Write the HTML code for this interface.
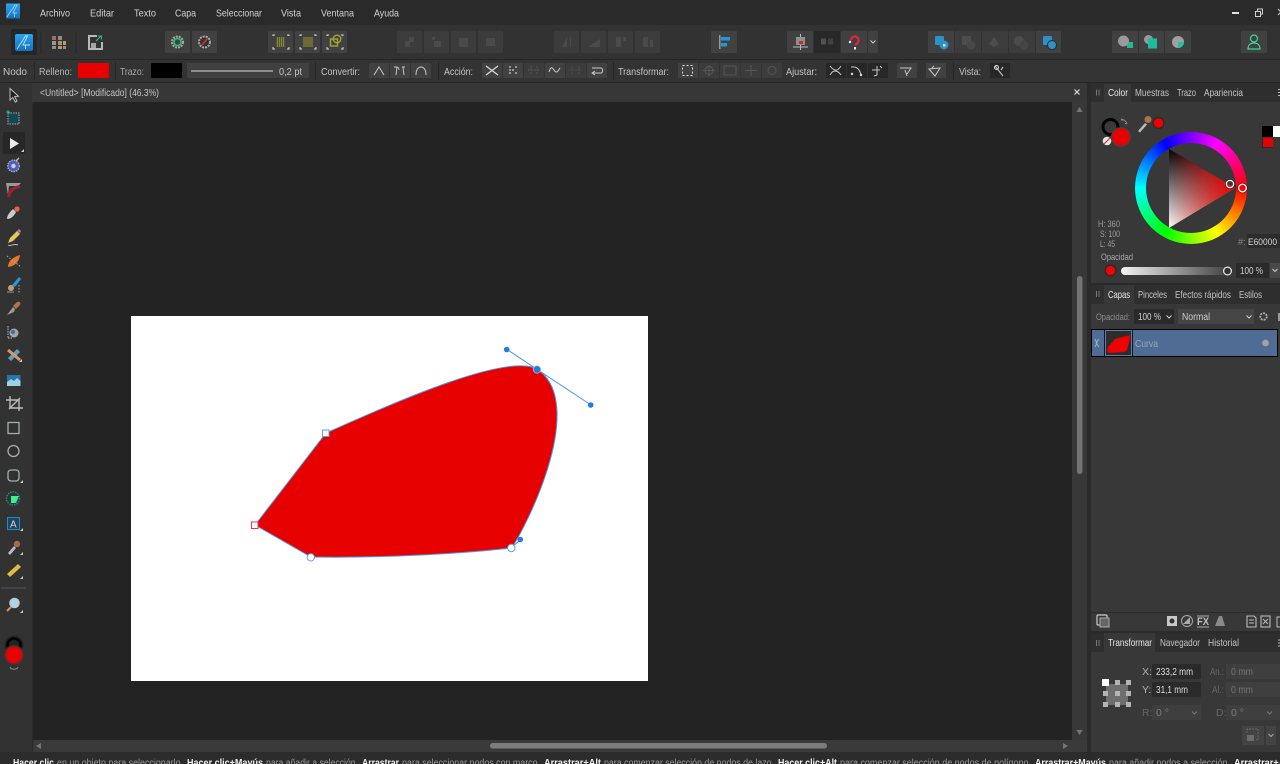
<!DOCTYPE html>
<html><head><meta charset="utf-8"><title>Affinity Designer</title>
<style>
html,body{margin:0;padding:0;background:#2b2b2b;width:1280px;height:764px;overflow:hidden}
svg{display:block;position:absolute;left:0;top:0}
text{font-family:"Liberation Sans",sans-serif;font-size:10.500px;fill:#c4c4c4;filter:blur(.25px)}
.b{fill:#414141}.d{fill:#3c3c3c}.k{fill:#272727}
.m{fill:#d2d2d2}.g{fill:#8a8a8a}.w{fill:#e6e6e6}
.ic{fill:none;stroke:#c8c8c8;stroke-width:1}
.di{fill:#4a4a4a}
.st{font-size:10px;fill:#9a9a9a}.sb{font-size:10px;fill:#f0f0f0;font-weight:bold}
</style></head><body>
<svg width="1280" height="764" viewBox="0 0 1280 764" xmlns="http://www.w3.org/2000/svg">
<defs>
<linearGradient id="tv" x1="0" y1="0" x2="0" y2="1"><stop offset="0" stop-color="#000"/><stop offset="1" stop-color="#fff"/></linearGradient>
<linearGradient id="th" x1="0" y1="0" x2="1" y2="0"><stop offset="0" stop-color="#e60000" stop-opacity="0"/><stop offset="1" stop-color="#f00000"/></linearGradient>
<linearGradient id="op" x1="0" y1="0" x2="1" y2="0"><stop offset="0" stop-color="#f4f4f4"/><stop offset="1" stop-color="#444"/></linearGradient>
<linearGradient id="logo" x1="0" y1="0" x2="0" y2="1"><stop offset="0" stop-color="#2aa6ee"/><stop offset="1" stop-color="#1670c0"/></linearGradient>
</defs>

<!-- main backgrounds -->
<rect width="1280" height="764" fill="#2b2b2b"/>
<rect x="0" y="0" width="1280" height="25" fill="#2a2a2a"/>
<rect x="0" y="25" width="1280" height="34" fill="#323232"/>
<rect x="0" y="60" width="1280" height="22" fill="#333333"/>
<rect x="0" y="59" width="1280" height="1" fill="#262626"/>
<rect x="0" y="82" width="1280" height="1" fill="#262626"/>
<rect x="0" y="83" width="32" height="681" fill="#323232"/>
<rect x="32" y="83" width="1056" height="19" fill="#373737"/>
<rect x="33" y="102" width="1039" height="638" fill="#232323"/>
<rect x="1072" y="102" width="15" height="650" fill="#383838"/>
<rect x="33" y="740" width="1054" height="12" fill="#3a3a3a"/>
<rect x="0" y="752" width="1280" height="12" fill="#2c2c2c"/>
<rect x="1077" y="276" width="5.500" height="198" rx="2.700" fill="#747474"/>
<rect x="490" y="743" width="337" height="5.500" rx="2.700" fill="#7c7c7c"/>
<path d="M1079.500 107l-3 5h6zM1079.500 735l-3-5h6z" fill="#777"/>
<path d="M36 746l5-3v6zM1068 746l-5-3v6z" fill="#777"/>

<!-- menu -->
<path d="M6 3.500h14v15H6z" fill="url(#logo)"/>
<path d="M7 17L15 5h2L13 13h4M14.500 13v4" fill="none" stroke="#a8d8f6" stroke-width=".8"/>
<text class="m" lengthAdjust="spacingAndGlyphs" x="40" y="16.500" textLength="30">Archivo</text>
<text class="m" lengthAdjust="spacingAndGlyphs" x="90" y="16.500" textLength="24">Editar</text>
<text class="m" lengthAdjust="spacingAndGlyphs" x="134" y="16.500" textLength="22">Texto</text>
<text class="m" lengthAdjust="spacingAndGlyphs" x="175" y="16.500" textLength="21">Capa</text>
<text class="m" lengthAdjust="spacingAndGlyphs" x="216" y="16.500" textLength="46">Seleccionar</text>
<text class="m" lengthAdjust="spacingAndGlyphs" x="281" y="16.500" textLength="20">Vista</text>
<text class="m" lengthAdjust="spacingAndGlyphs" x="321" y="16.500" textLength="33">Ventana</text>
<text class="m" lengthAdjust="spacingAndGlyphs" x="374" y="16.500" textLength="25">Ayuda</text>
<rect x="1232" y="12" width="7" height="2" fill="#e0e0e0"/>
<path d="M1255.500 11.500h5v5h-5zM1257.500 11v-2h5v5h-2" fill="none" stroke="#d0d0d0"/>
<path d="M1278 9l6 6M1284 9l-6 6" stroke="#d0d0d0"/>

<!-- toolbar: left -->
<rect x="11" y="29" width="26" height="26" rx="2" fill="#262626"/>
<rect x="15" y="34" width="18" height="17" rx="2" fill="url(#logo)"/>
<path d="M17 49L25.500 36h2L23 45h7M25.500 45v4" fill="none" stroke="#bfe4fa" stroke-width=".9"/>
<rect x="40.500" y="32" width="1" height="21" fill="#272727"/>
<g fill="#8d8d8d"><rect x="52" y="36" width="4" height="4" fill="#a46a6a"/><rect x="58" y="36" width="4" height="4"/><rect x="52" y="41" width="4" height="4" fill="#999"/><rect x="58" y="41" width="4" height="4" fill="#b59060"/><rect x="63" y="41" width="3" height="4" fill="#b0a068"/><rect x="52" y="46" width="4" height="3"/><rect x="58" y="46" width="4" height="3" fill="#b59c6c"/><rect x="63" y="46" width="3" height="3"/></g>
<rect x="75.500" y="32" width="1" height="21" fill="#272727"/>
<path d="M97 36h-8v13h13v-7" fill="none" stroke="#b8b8b8" stroke-width="2"/>
<rect x="91" y="43" width="5" height="5" fill="#a5a5a5"/>
<path d="M96 41l5-5m-3 0h3.500v3.500" fill="none" stroke="#3fb393" stroke-width="1"/>

<!-- toolbar buttons -->
<rect class="b" x="165" y="31" width="25" height="22" rx="1"/>
<rect class="b" x="192" y="31" width="25" height="22" rx="1"/>
<circle cx="177.500" cy="42" r="5.500" fill="none" stroke="#a8a8a8" stroke-width="2" stroke-dasharray="2 1"/>
<circle cx="177.500" cy="42" r="3.500" fill="none" stroke="#27c27d" stroke-width="1.600"/>
<circle cx="204.500" cy="42" r="5.500" fill="#333" stroke="#a8a8a8" stroke-width="2" stroke-dasharray="2 1"/>
<path d="M201.500 45.500l6-7" stroke="#e03040" stroke-width="1.500"/>

<rect class="b" x="268" y="31" width="25" height="22" rx="1"/>
<rect class="b" x="295" y="31" width="25" height="22" rx="1"/>
<rect class="b" x="322" y="31" width="25" height="22" rx="1"/>
<rect x="276" y="37" width="9" height="10" fill="#54542c"/>
<path d="M277 38h7M277 40h7M277 42h7M277 44h7M277 46h7" stroke="#b9b84a" stroke-dasharray="1 1"/>
<path d="M273 36v-1h2M287 35h2v1M273 47v2h2M287 49h2v-2M300 36v-1h2M314 35h2v1M300 47v2h2M314 49h2v-2M327 36v-1h2M341 35h2v1M327 47v2h2M341 49h2v-2" fill="none" stroke="#ddd"/>
<rect x="303" y="37" width="10" height="10" fill="#6c6c34"/>
<rect x="330.500" y="39" width="7" height="7" fill="none" stroke="#a4a832" stroke-width="1.400"/>
<circle cx="337" cy="39" r="3.800" fill="none" stroke="#a4a832" stroke-width="1.400"/>

<g class="d">
<rect x="397" y="31" width="25" height="22"/><rect x="424" y="31" width="25" height="22"/><rect x="451" y="31" width="25" height="22"/><rect x="478" y="31" width="25" height="22"/>
<rect x="554" y="31" width="25" height="22"/><rect x="581" y="31" width="25" height="22"/><rect x="608" y="31" width="25" height="22"/><rect x="635" y="31" width="25" height="22"/>
</g>
<g class="di">
<rect x="405" y="41" width="5" height="6"/><rect x="409" y="37" width="5" height="5"/>
<rect x="434" y="41" width="7" height="6"/><rect x="432" y="37" width="3" height="3"/>
<rect x="459" y="38" width="9" height="9"/>
<rect x="486" y="38" width="9" height="8"/>
<path d="M562 47l5-10v10zM570 47v-10h1v10z"/>
<path d="M588 47l12-8v8z"/>
<path d="M616 37h5v10h-5zM623 37h3v4h-3z"/>
<path d="M643 37h5v10h-5zM650 40h3v7h-3z"/>
</g>

<rect class="b" x="711" y="31" width="26" height="22" rx="1"/>
<rect x="719" y="35" width="1.500" height="14" fill="#999"/>
<rect x="721" y="37" width="9" height="3.500" fill="#2198d8"/>
<rect x="721" y="43" width="6" height="3.500" fill="#2198d8"/>

<rect class="b" x="787" y="31" width="26" height="22" rx="1"/>
<rect x="814" y="31" width="26" height="22" fill="#282828"/>
<rect class="b" x="841" y="31" width="26" height="22" rx="1"/>
<rect class="b" x="868" y="31" width="10" height="22" rx="1"/>
<path d="M793 47h15M800.500 34v16" stroke="#bdbdbd"/>
<rect x="796" y="37" width="9" height="8" fill="#8f8f8f"/>
<rect x="799" y="41" width="4" height="3" fill="#d8242f"/>
<rect x="821" y="38.500" width="5" height="6" fill="#505050"/><rect x="828" y="38.500" width="5" height="6" fill="#424242"/>
<path d="M851 40.500a3.800 3.800 0 1 1 6.500 2.500l-2.500 2" fill="none" stroke="#e5253b" stroke-width="2.200"/>
<rect x="854" y="47" width="2" height="2.500" fill="#eee"/><circle cx="850" cy="42" r="1.200" fill="#eee"/>
<path d="M870.500 40.500l2.500 2.500 2.500-2.500" fill="none" stroke="#ccc"/>

<g class="b">
<rect x="928" y="31" width="26" height="22"/><rect x="1036" y="31" width="25" height="22"/>
</g>
<rect class="d" x="955" y="31" width="26" height="22"/><rect class="d" x="982" y="31" width="26" height="22"/><rect class="d" x="1009" y="31" width="26" height="22"/>
<rect x="935" y="36" width="9" height="9" rx="1" fill="#2f90c8"/><circle cx="944" cy="45" r="4.500" fill="#2f90c8"/><rect x="943" y="44" width="2.500" height="2.500" fill="#bfe4f7"/>
<rect x="962" y="36" width="9" height="9" fill="#4d4d4d"/><circle cx="971" cy="45" r="4.500" fill="#484848"/>
<path d="M989 44l5-7 5 7-5 3z" fill="#4c4c4c"/>
<circle cx="1019" cy="41" r="5" fill="#4c4c4c"/><circle cx="1024" cy="45" r="4.500" fill="#454545"/>
<rect x="1043" y="36" width="9" height="9" rx="1" fill="#2f90c8"/><circle cx="1052" cy="45" r="4.500" fill="#2f90c8" stroke="#2a2a2a"/>

<rect class="b" x="1112" y="31" width="26" height="22"/><rect class="b" x="1139" y="31" width="25" height="22"/><rect class="b" x="1165" y="31" width="26" height="22"/>
<path d="M1127 42h6v6h-6z" fill="#25b898"/><circle cx="1123.500" cy="41" r="5.500" fill="#9a9a9a"/>
<circle cx="1148.500" cy="39.500" r="4.500" fill="#9a9a9a"/><rect x="1148" y="38.500" width="9" height="10" fill="#1cbd9c"/>
<circle cx="1178" cy="42" r="6" fill="#a0a0a0"/><path d="M1178 42h6a6 6 0 0 1-6 6z" fill="#22c0a0"/>
<rect class="b" x="1241" y="31" width="26" height="22"/>
<circle cx="1254" cy="38.500" r="3.500" fill="none" stroke="#3dd79a" stroke-width="1.200"/>
<path d="M1248 49c0-4 2.500-6 6-6s6 2 6 6z" fill="none" stroke="#3dd79a" stroke-width="1.200"/>

<!-- context bar -->
<text lengthAdjust="spacingAndGlyphs" x="3" y="75" textLength="24" fill="#c9c9c9">Nodo</text>
<g fill="#262626"><rect x="34" y="62" width="1" height="18"/><rect x="115" y="62" width="1" height="18"/><rect x="315" y="62" width="1" height="18"/><rect x="438" y="62" width="1" height="18"/><rect x="613" y="62" width="1" height="18"/><rect x="953" y="62" width="1" height="18"/></g>
<text lengthAdjust="spacingAndGlyphs" x="39" y="75" textLength="33" style="fill:#b8b8b8">Relleno:</text>
<rect x="78" y="63" width="31" height="15" rx="1" fill="#e60000"/>
<text lengthAdjust="spacingAndGlyphs" x="120" y="75" textLength="24" style="fill:#a8a8a8">Trazo:</text>
<rect x="151" y="63" width="31" height="15" rx="1" fill="#000"/>
<rect x="187" y="63" width="122" height="15" fill="#404040"/>
<rect x="191" y="70" width="82" height="2" fill="#8c8c8c"/>
<text lengthAdjust="spacingAndGlyphs" x="279" y="75" textLength="23">0,2 pt</text>
<text lengthAdjust="spacingAndGlyphs" x="321" y="75" textLength="39">Convertir:</text>
<g class="b"><rect x="369" y="63" width="20" height="15"/><rect x="390" y="63" width="20" height="15"/><rect x="411" y="63" width="20" height="15"/>
<rect x="482" y="63" width="20" height="15"/><rect x="503" y="63" width="20" height="15"/><rect x="587" y="63" width="20" height="15"/><rect x="545" y="63" width="20" height="15"/></g>
<rect class="d" x="524" y="63" width="20" height="15"/><rect class="d" x="566" y="63" width="20" height="15"/>
<path d="M374 75l5-8 5 8M394 67h3c1 0 2 1 2 3M405 67h-3M396 75l1-8M404 75l-1-8M416 75c0-5 2-8 5-8s5 3 5 8" class="ic"/>
<text lengthAdjust="spacingAndGlyphs" x="444" y="75" textLength="29">Acción:</text>
<path d="M486 66l12 9M498 66l-12 9" stroke="#d8d8d8" stroke-width="1.300"/>
<path d="M510 66v8M516 66v3M516 72v3M512 70h2" stroke="#c8c8c8" stroke-width="1.200" stroke-dasharray="2 1"/>
<path d="M531 66v9M537 66v9M528 70h12" stroke="#555" stroke-dasharray="2 1"/>
<path d="M549 72c2-6 3-5 5-2s3 3 6-2" class="ic"/>
<path d="M572 66v9M579 66v9M569 70h13" stroke="#4d4d4d" stroke-dasharray="2 1"/>
<path d="M592 68h9c2 0 2 5 0 5h-8M595 71l-3 2 3 2" class="ic"/>
<text lengthAdjust="spacingAndGlyphs" x="618" y="75" textLength="51">Transformar:</text>
<g class="b"><rect x="678" y="63" width="20" height="15"/></g>
<g class="d"><rect x="699" y="63" width="20" height="15"/><rect x="720" y="63" width="20" height="15"/><rect x="741" y="63" width="20" height="15"/><rect x="762" y="63" width="20" height="15"/></g>
<rect x="682.500" y="65.500" width="10" height="10" fill="none" stroke="#ddd" stroke-dasharray="2 2"/>
<circle cx="709" cy="70.500" r="4" fill="none" stroke="#585858"/><path d="M703 70.500h12M709 65v11M724 66v9h12v-9zM751 65v11M745 70.500h12" fill="none" stroke="#555"/><circle cx="772" cy="70.500" r="4" fill="none" stroke="#555"/>
<text lengthAdjust="spacingAndGlyphs" x="786" y="75" textLength="31">Ajustar:</text>
<rect class="k" x="826" y="63" width="20" height="15"/><rect class="k" x="847" y="63" width="20" height="15"/><rect class="k" x="868" y="63" width="20" height="15"/>
<path d="M830 66c2 3 3 3 5 4s4-1 6-4M830 75c2-3 3-4 5-4s4 1 6 4" class="ic"/>
<path d="M851 67h3c3 0 6 3 7 8" class="ic"/><circle cx="852" cy="74" r="1.200" fill="#ddd"/><circle cx="861" cy="75" r="1.200" fill="#ddd"/>
<path d="M872 70h8M877 66v9l-3 1M880 66l2 2" class="ic"/>
<rect class="b" x="897" y="63" width="20" height="15"/><rect class="b" x="926" y="63" width="20" height="15"/>
<path d="M900 68h11l-4 6M905 70l2 6" class="ic"/>
<path d="M929 69l11-1-5 8zM932 68l2-2" class="ic"/>
<text lengthAdjust="spacingAndGlyphs" x="959" y="75" textLength="22">Vista:</text>
<rect class="k" x="990" y="63" width="20" height="15"/>
<path d="M995 66l8 10M1003 67l-2 3" stroke="#bbb" stroke-width="1.200"/><circle cx="996.500" cy="67.500" r="2" fill="none" stroke="#ddd"/>

<!-- doc tab -->
<text lengthAdjust="spacingAndGlyphs" x="40" y="96" textLength="119" style="font-size:10px;fill:#c6c6c6">&lt;Untitled&gt; [Modificado] (46.3%)</text>
<path d="M1074.500 89.500l5 5M1079.500 89.500l-5 5" stroke="#ddd" stroke-width="1.200"/>

<!-- document -->
<rect x="131" y="316" width="517" height="365" fill="#fff"/>
<path d="M255 525L326 433C400 400 507 353 537 369C591 405 520 539 511 548C450 555 370 558 311 557Z" fill="#e60000" stroke="#4a9bea" stroke-width="1"/>
<path d="M507 349.500L591 405M511 548L520.500 539.500" stroke="#4a96e8" stroke-width="1"/>
<circle cx="506.700" cy="349.500" r="2.800" fill="#1f7fe0"/>
<circle cx="590.700" cy="405" r="2.800" fill="#1f7fe0"/>
<circle cx="520.300" cy="539.500" r="2.800" fill="#1f7fe0"/>
<circle cx="537" cy="369.500" r="3.800" fill="#1f7fe0" stroke="#f4c0b8" stroke-width=".7"/>
<rect x="322.500" y="430" width="6.500" height="6.500" fill="#fff" stroke="#5b9fe8"/>
<rect x="251.500" y="522" width="6.500" height="6.500" fill="#fff" stroke="#ee3a44"/>
<circle cx="310.800" cy="557.300" r="3.700" fill="#fff" stroke="#5b9fe8"/>
<circle cx="511.300" cy="548" r="3.700" fill="#fff" stroke="#5b9fe8"/>

<!-- left tools -->
<path d="M10 88.500V100l2.800-2.500 2.500 4.500 1.700-1-2.300-4.500 3.800-.3z" fill="#222" stroke="#bdbdbd"/>
<rect x="8" y="113" width="11" height="11" fill="#134a52" stroke="#aaa" stroke-dasharray="1.500 1"/>
<path d="M6 112h4M8 110v4" stroke="#2fb38d"/>
<rect x="3" y="132" width="22" height="22" rx="2" fill="#272727"/>
<path d="M10 138v11l9-5.500z" fill="#ececec"/><path d="M24 152v-3l-3 3z" fill="#ccc"/>
<circle cx="13.500" cy="166" r="5.800" fill="#4f5fc0" stroke="#aaa" stroke-width="1.400" stroke-dasharray="1.500 1"/><circle cx="13.500" cy="166" r="2.200" fill="#c8cfea"/><path d="M16 161l3-3" stroke="#bbb" stroke-width="1.400"/>
<path d="M6 183h15l-3 3h-9l-1 9z" fill="#9a9a9a"/><path d="M7 197c1-7 5-11 13-12v3c-6 1-9 4-10 9z" fill="#a51f2c"/>
<path d="M7 219c0-4 3-7 6-10l3 3c-2 4-5 7-9 7z" fill="#c9c9c9"/><circle cx="17" cy="209" r="2.600" fill="#f0603d"/>
<path d="M8 243l2-5 7-7 3 3-7 7z" fill="#e6c75c"/><path d="M17 231l2-2 2 2-1 2z" fill="#d660c8"/><path d="M8 245c3 2 5-2 10 0" stroke="#bbb" fill="none"/>
<path d="M8 267c0-6 5-10 12-12-1 7-5 11-12 12z" fill="#e8772a"/><path d="M7 256l14 11" stroke="#aaa" stroke-dasharray="1.500 1.500"/>
<path d="M12 285l7-8 2 2-6 8z" fill="#2a94dc"/><circle cx="11" cy="288" r="3" fill="#c89a78"/><path d="M7 292h7" stroke="#999"/><path d="M19 285v8" stroke="#aaa" stroke-dasharray="1.500 1.500"/>
<path d="M7 315l7-3 1-3-2-2-3 4z" fill="#9a9a9a"/><path d="M13 306l4-4c3-1 4 1 3 3l-4 4z" fill="#b5704c"/>
<circle cx="14" cy="333" r="4.500" fill="#a5a5a5"/><path d="M8 326v12M8 338h4" stroke="#bbb" stroke-dasharray="1.500 1"/><circle cx="13" cy="332" r="2" fill="#2c72b8"/>
<path d="M8 358l9-9 3 3-9 9z" fill="#5f9ec8"/><path d="M8 350l12 10" stroke="#cf9b62" stroke-width="3"/><path d="M22 362v-3l-3 3z" fill="#ccc"/>
<rect x="7" y="375" width="13.500" height="11" fill="#2378a8"/><path d="M7 382l4-3 3 2 3-3 3.500 3v5H7z" fill="#9ed0e6"/>
<path d="M6 400h13v11M10 396v12h13M9 409l11-11" fill="none" stroke="#bcbcbc" stroke-width="1.400"/>
<rect x="8" y="422.500" width="11" height="11" fill="#2b3236" stroke="#ababab" stroke-width="1.300"/>
<circle cx="13.500" cy="451" r="5.500" fill="#2b3236" stroke="#ababab" stroke-width="1.300"/>
<rect x="8" y="470" width="11" height="11" rx="3" fill="#2b3236" stroke="#ababab" stroke-width="1.300"/><path d="M23 483v-3l-3 3z" fill="#ccc"/>
<circle cx="13" cy="498.500" r="6.500" fill="none" stroke="#2a7d94" stroke-width="1.500" stroke-dasharray="1.500 1"/><path d="M11 496h8l-3 7-5 0z" fill="#3bf08f"/>
<rect x="7.500" y="517.500" width="12" height="12" fill="#1d4460" stroke="#2a88bc"/><text x="10" y="527.500" style="font-size:10px;fill:#d5d5d5">A</text><path d="M23 531v-3l-3 3z" fill="#ccc"/>
<path d="M8 553l6-7 2 2-6 7z" fill="#bdbdbd"/><circle cx="17" cy="544" r="3.200" fill="#ad6c48"/><path d="M23 555v-3l-3 3z" fill="#ccc"/>
<path d="M7 574l11-10 3 3-11 10z" fill="#e3bb43"/><path d="M23 579v-3l-3 3z" fill="#ccc"/>
<rect x="1" y="587.500" width="25" height="1" fill="#555"/>
<circle cx="14.500" cy="603" r="4.500" fill="#a8d8f0" stroke="#c5c5c5" stroke-width="1.600"/><path d="M11 607l-4 4" stroke="#c89468" stroke-width="2"/><path d="M23 613v-3l-3 3z" fill="#ccc"/>
<circle cx="14" cy="645" r="9.500" fill="#222"/><circle cx="14" cy="645" r="6.500" fill="none" stroke="#000" stroke-width="2.500"/>
<circle cx="14" cy="655" r="10" fill="#383838"/><circle cx="14" cy="655" r="8.500" fill="#e60000"/>
<path d="M10 667c1 3 7 3 8 0" fill="none" stroke="#888"/>

<!-- right panel -->
<rect x="1087" y="83" width="4" height="681" fill="#2b2b2b"/>
<rect x="1091" y="83" width="189" height="19" fill="#2e2e2e"/>
<rect x="1091" y="102" width="189" height="181" fill="#383838"/>
<rect x="1104" y="84" width="27" height="18" fill="#383838"/>
<path d="M1096.500 89.500v6M1099 89.500v6" stroke="#777"/>
<text lengthAdjust="spacingAndGlyphs" x="1108" y="96" textLength="20" class="w">Color</text>
<text lengthAdjust="spacingAndGlyphs" x="1135" y="96" textLength="34">Muestras</text>
<text lengthAdjust="spacingAndGlyphs" x="1177" y="96" textLength="19">Trazo</text>
<text lengthAdjust="spacingAndGlyphs" x="1204" y="96" textLength="39">Apariencia</text>
<path d="M1278 89.500h3M1278 92.500h3M1278 95.500h3" stroke="#bbb"/>

<circle cx="1111" cy="127" r="9" fill="#3a3a3a"/><circle cx="1110.500" cy="127" r="7.500" fill="none" stroke="#000" stroke-width="3"/>
<circle cx="1121" cy="137" r="10" fill="#444"/><circle cx="1121" cy="137" r="8.800" fill="#e60000"/>
<circle cx="1107" cy="141" r="4.300" fill="#e8e8e8"/><path d="M1104 144l6-6" stroke="#e03030" stroke-width="1.200"/>
<path d="M1121 119c3 .5 5 2 6 5M1127 124l-2-.5M1121 119l1.500 2" fill="none" stroke="#888"/>
<path d="M1138 131l7-8 2 1.500-7 8z" fill="#bbb"/><circle cx="1148" cy="119.500" r="3.500" fill="#b0714c"/>
<circle cx="1158.500" cy="123" r="6" fill="#2a2a2a"/><circle cx="1158.500" cy="123" r="4.800" fill="#f00000"/>

<rect x="1262" y="126" width="11" height="11" fill="#000"/><rect x="1273" y="126" width="7" height="11" fill="#fff"/><rect x="1262" y="137" width="11" height="11" fill="#2a2a2a"/><rect x="1263" y="137.500" width="10" height="9.500" fill="#e60000"/>

<foreignObject x="1135" y="132" width="112" height="112"><div xmlns="http://www.w3.org/1999/xhtml" style="width:112px;height:112px;border-radius:50%;background:conic-gradient(from 90deg,#f00,#ff0 60deg,#0f0 120deg,#0ff 180deg,#00f 240deg,#f0f 300deg,#f00 360deg)"></div></foreignObject>
<circle cx="1191" cy="188" r="45" fill="#383838"/>
<polygon points="1169,149 1169,228 1235,188" fill="url(#tv)"/>
<polygon points="1169,149 1169,228 1235,188" fill="url(#th)"/>
<circle cx="1230" cy="184" r="3.700" fill="none" stroke="#fff" stroke-width="1.300"/><circle cx="1230" cy="184" r="4.700" fill="none" stroke="#222" stroke-width=".6"/>
<circle cx="1242.500" cy="188" r="3.900" fill="none" stroke="#fff" stroke-width="1.300"/><circle cx="1242.500" cy="188" r="4.900" fill="none" stroke="#222" stroke-width=".6"/>

<text lengthAdjust="spacingAndGlyphs" x="1098" y="227" textLength="22" style="font-size:9px;fill:#9e9e9e">H: 360</text>
<text lengthAdjust="spacingAndGlyphs" x="1100" y="237" textLength="20" style="font-size:9px;fill:#9e9e9e">S: 100</text>
<text lengthAdjust="spacingAndGlyphs" x="1100" y="247" textLength="15" style="font-size:9px;fill:#9e9e9e">L: 45</text>
<text x="1238" y="245" style="font-size:9px;fill:#8e8e8e">#:</text>
<rect x="1247" y="234" width="33" height="14" fill="#2c2c2c"/>
<text lengthAdjust="spacingAndGlyphs" x="1248" y="245" textLength="29" style="font-size:9.500px;fill:#d6d6d6">E60000</text>
<text lengthAdjust="spacingAndGlyphs" x="1101" y="260" textLength="32" style="font-size:9px;fill:#a8a8a8">Opacidad</text>
<circle cx="1110.500" cy="270.500" r="6" fill="#2a2a2a"/><circle cx="1110.500" cy="270.500" r="4.800" fill="#f00000"/>
<rect x="1121" y="267" width="106" height="8" rx="4" fill="url(#op)"/>
<circle cx="1227.500" cy="271" r="3.900" fill="#333" stroke="#eee" stroke-width="1.200"/>
<rect x="1236" y="263" width="33" height="15" fill="#2a2a2a"/>
<text lengthAdjust="spacingAndGlyphs" x="1240" y="274" textLength="23" style="fill:#d0d0d0">100 %</text>
<rect x="1270" y="263" width="10" height="15" fill="#484848"/><path d="M1272.500 269l2.500 2.500 2.500-2.500" fill="none" stroke="#ccc"/>

<!-- capas -->
<rect x="1091" y="283" width="189" height="2" fill="#292929"/>
<rect x="1091" y="285" width="189" height="19" fill="#2e2e2e"/>
<rect x="1091" y="304" width="189" height="308" fill="#383838"/>
<rect x="1104" y="285" width="30" height="19" fill="#383838"/>
<path d="M1096.500 291v6M1099 291v6" stroke="#777"/>
<text lengthAdjust="spacingAndGlyphs" x="1108" y="298" textLength="22" class="w">Capas</text>
<text lengthAdjust="spacingAndGlyphs" x="1138" y="298" textLength="29">Pinceles</text>
<text lengthAdjust="spacingAndGlyphs" x="1175" y="298" textLength="56">Efectos rápidos</text>
<text lengthAdjust="spacingAndGlyphs" x="1239" y="298" textLength="23">Estilos</text>
<text lengthAdjust="spacingAndGlyphs" x="1096" y="320" textLength="34" style="font-size:9.500px;fill:#8e8e8e">Opacidad:</text>
<rect x="1134" y="309" width="40" height="15" rx="1" fill="#2a2a2a"/>
<text lengthAdjust="spacingAndGlyphs" x="1138" y="320" textLength="23" style="fill:#d0d0d0">100 %</text>
<path d="M1166.500 315.500l2.500 2.500 2.500-2.500" fill="none" stroke="#ccc"/>
<rect x="1178" y="309" width="76" height="15" fill="#454545"/>
<text lengthAdjust="spacingAndGlyphs" x="1182" y="320" textLength="28" style="fill:#d0d0d0">Normal</text>
<path d="M1246.500 315.500l2.500 2.500 2.500-2.500" fill="none" stroke="#ccc"/>
<circle cx="1263.500" cy="316.500" r="3.300" fill="none" stroke="#aaa" stroke-width="1.800" stroke-dasharray="2 1"/>
<rect x="1278" y="313" width="2" height="8" fill="#999"/>
<rect x="1091" y="329" width="187" height="28" fill="#000"/>
<rect x="1092" y="330" width="185" height="26" fill="#4f6d94"/>
<rect x="1104" y="330" width="1" height="26" fill="#151515"/><rect x="1132" y="330" width="1" height="26" fill="#151515"/>
<path d="M1099 339l-3 4 3 4M1095 339l2 4-2 4" fill="none" stroke="#9fb0c6"/>
<rect x="1105.500" y="330.500" width="26" height="25" fill="#2c2c2c" stroke="#5e80ab"/>
<path d="M1107 351l1-4 7-8 15-4 0 4-3 11-3 2-15 1z" fill="#f00000"/>
<text lengthAdjust="spacingAndGlyphs" x="1135" y="347" textLength="23" style="fill:#93a6bc">Curva</text>
<circle cx="1265.500" cy="343" r="3.400" fill="#a2a2a2"/>

<!-- bottom bar of layers -->
<rect x="1091" y="612" width="189" height="19" fill="#383838"/>
<rect x="1091" y="612" width="189" height="1" fill="#2b2b2b"/>
<rect x="1097" y="615" width="10" height="10" rx="1" fill="none" stroke="#ccc" stroke-width="1.200"/><rect x="1100" y="618" width="9" height="9" fill="#666" stroke="#aaa"/>
<rect x="1167" y="616" width="10" height="10" fill="#c8c8c8"/><circle cx="1172" cy="621" r="2.500" fill="#333"/>
<circle cx="1187" cy="621" r="5.500" fill="none" stroke="#aaa"/><path d="M1183 624l7-7v7z" fill="#aaa"/>
<text lengthAdjust="spacingAndGlyphs" x="1197" y="625" textLength="12" style="font-size:11px;fill:#c0c0c0;font-weight:bold">FX</text><path d="M1197 616h12M1197 627h12" stroke="#aaa"/>
<path d="M1215 626l4-10h3l3 10z" fill="#8a8a8a"/>
<path d="M1247 616h7l2 2v9h-9zM1249 620h5M1249 623h5" fill="none" stroke="#bbb" stroke-width="1.100"/>
<rect x="1261" y="616" width="9" height="11" fill="none" stroke="#bbb" stroke-width="1.100"/><path d="M1263 619l5 5M1268 619l-5 5" stroke="#bbb"/>
<rect x="1277" y="617" width="5" height="10" fill="none" stroke="#bbb"/>

<!-- transform -->
<rect x="1091" y="631" width="189" height="3" fill="#2b2b2b"/>
<rect x="1091" y="634" width="189" height="18" fill="#2e2e2e"/>
<rect x="1091" y="652" width="189" height="100" fill="#383838"/>
<rect x="1104" y="633" width="51" height="19" fill="#383838"/>
<path d="M1096.500 640v6M1099 640v6" stroke="#777"/>
<text lengthAdjust="spacingAndGlyphs" x="1108" y="646" textLength="44" class="w">Transformar</text>
<text lengthAdjust="spacingAndGlyphs" x="1160" y="646" textLength="40">Navegador</text>
<text lengthAdjust="spacingAndGlyphs" x="1208" y="646" textLength="31">Historial</text>
<path d="M1278 640h3M1278 643h3M1278 646h3" stroke="#bbb"/>

<rect x="1106" y="684" width="22" height="21" fill="#6e6e6e"/>
<g fill="#b4b4b4"><rect x="1115" y="680" width="5" height="5"/><rect x="1126" y="680" width="5" height="5"/><rect x="1103" y="691" width="5" height="5"/><rect x="1115" y="691" width="5" height="5"/><rect x="1126" y="691" width="5" height="5"/><rect x="1103" y="702" width="5" height="5"/><rect x="1115" y="702" width="5" height="5"/><rect x="1126" y="702" width="5" height="5"/></g>
<rect x="1102" y="679" width="7" height="7" fill="#fff"/>

<text x="1142" y="675" style="fill:#b0b0b0">X:</text>
<rect x="1152" y="664" width="49" height="15" rx="1" fill="#2a2a2a"/>
<text lengthAdjust="spacingAndGlyphs" x="1156" y="675" textLength="37" style="fill:#dcdcdc">233,2 mm</text>
<text x="1142" y="693" style="fill:#b0b0b0">Y:</text>
<rect x="1152" y="682" width="49" height="15" rx="1" fill="#2a2a2a"/>
<text lengthAdjust="spacingAndGlyphs" x="1156" y="693" textLength="32" style="fill:#dcdcdc">31,1 mm</text>
<text lengthAdjust="spacingAndGlyphs" x="1210" y="675" textLength="14" style="fill:#666">An.:</text>
<rect x="1226" y="664" width="54" height="15" fill="#3f3f3f"/>
<text lengthAdjust="spacingAndGlyphs" x="1231" y="675" textLength="22" style="fill:#747474">0 mm</text>
<text lengthAdjust="spacingAndGlyphs" x="1212" y="693" textLength="12" style="fill:#666">Al.:</text>
<rect x="1226" y="682" width="54" height="15" fill="#3f3f3f"/>
<text lengthAdjust="spacingAndGlyphs" x="1231" y="693" textLength="22" style="fill:#747474">0 mm</text>
<text x="1142" y="716" style="fill:#666">R:</text>
<rect x="1152" y="705" width="49" height="15" fill="#3f3f3f"/>
<text x="1156" y="716" style="fill:#7a7a7a">0 °</text>
<path d="M1192 711.500l2.500 2.500 2.500-2.500" fill="none" stroke="#777"/>
<text x="1216" y="716" style="fill:#666">D:</text>
<rect x="1226" y="705" width="54" height="15" fill="#3f3f3f"/>
<text x="1231" y="716" style="fill:#7a7a7a">0 °</text>
<path d="M1267 711.500l2.500 2.500 2.500-2.500" fill="none" stroke="#777"/>
<rect x="1242" y="726" width="22" height="19" fill="#434343"/>
<rect x="1266" y="726" width="10" height="19" fill="#434343"/>
<rect x="1247" y="735" width="7" height="6" fill="#6a6a6a"/><path d="M1247 733v-4h11v11h-2" fill="none" stroke="#6a6a6a" stroke-dasharray="2 1"/>
<path d="M1268.500 734l2.500 2.500 2.500-2.500" fill="none" stroke="#aaa"/>

<!-- status -->
<text class="sb" lengthAdjust="spacingAndGlyphs" x="13" y="766" textLength="41">Hacer clic</text>
<text class="st" lengthAdjust="spacingAndGlyphs" x="57" y="766" textLength="126">en un objeto para seleccionarlo.</text>
<text class="sb" lengthAdjust="spacingAndGlyphs" x="187" y="766" textLength="76">Hacer clic+Mayús</text>
<text class="st" lengthAdjust="spacingAndGlyphs" x="266" y="766" textLength="92">para añadir a selección.</text>
<text class="sb" lengthAdjust="spacingAndGlyphs" x="362" y="766" textLength="37">Arrastrar</text>
<text class="st" lengthAdjust="spacingAndGlyphs" x="402" y="766" textLength="138">para seleccionar nodos con marco.</text>
<text class="sb" lengthAdjust="spacingAndGlyphs" x="544" y="766" textLength="57">Arrastrar+Alt</text>
<text class="st" lengthAdjust="spacingAndGlyphs" x="604" y="766" textLength="170">para comenzar selección de nodos de lazo.</text>
<text class="sb" lengthAdjust="spacingAndGlyphs" x="778" y="766" textLength="59">Hacer clic+Alt</text>
<text class="st" lengthAdjust="spacingAndGlyphs" x="840" y="766" textLength="191">para comenzar selección de nodos de polígono.</text>
<text class="sb" lengthAdjust="spacingAndGlyphs" x="1035" y="766" textLength="71">Arrastrar+Mayús</text>
<text class="st" lengthAdjust="spacingAndGlyphs" x="1109" y="766" textLength="121">para añadir nodos a selección.</text>
<text class="sb" lengthAdjust="spacingAndGlyphs" x="1234" y="766" textLength="57">Arrastrar+Alt</text>
</svg>
</body></html>
